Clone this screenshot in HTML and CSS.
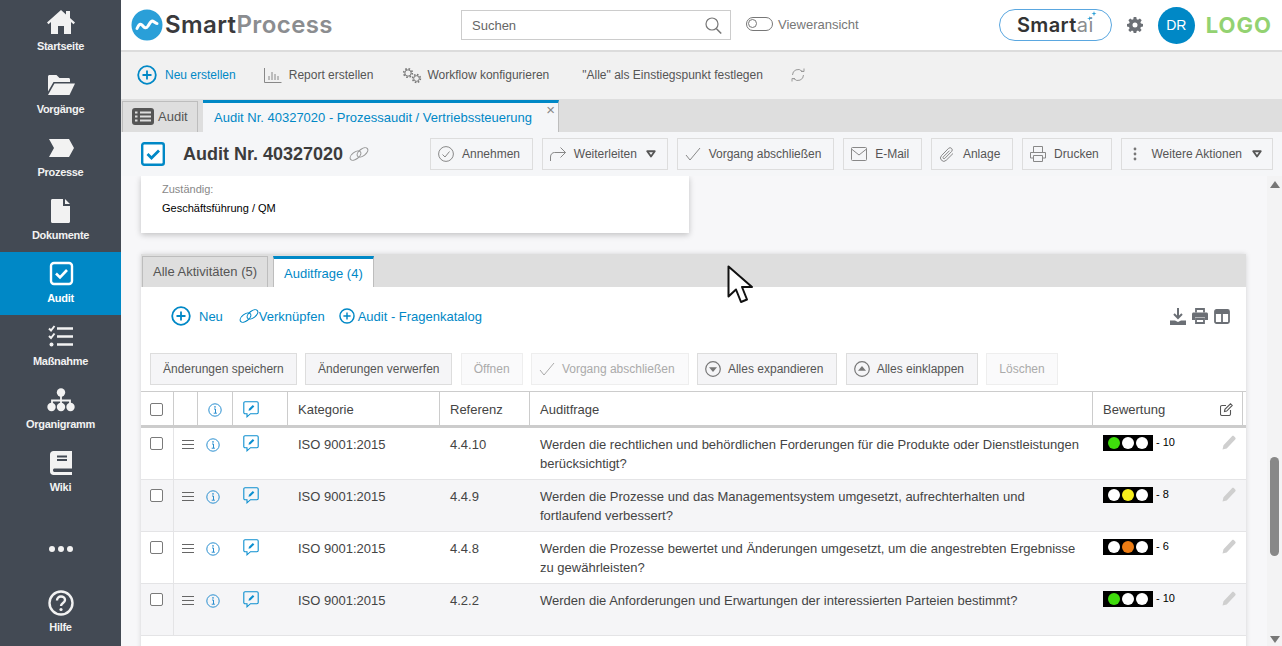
FILE: index.html
```html
<!DOCTYPE html>
<html lang="de">
<head>
    <meta charset="UTF-8">
    <meta name="viewport" content="width=device-width, initial-scale=1.0">
    <title>SmartProcess - Audit</title>
    <link rel="stylesheet" href="styles.css">
</head>
<body>

<svg class="icon-defs" xmlns="http://www.w3.org/2000/svg">
    <symbol id="i-plus" viewBox="0 0 20 20"><circle cx="10" cy="10" r="8.8" fill="none" stroke="currentColor" stroke-width="1.8"/><path d="M10 5.5v9M5.5 10h9" fill="none" stroke="currentColor" stroke-width="1.8"/></symbol>
    <symbol id="i-chain" viewBox="0 0 20 14"><g fill="none" stroke="currentColor" stroke-width="1.1"><ellipse cx="6.5" cy="8.6" rx="6.2" ry="3.4" transform="rotate(-38 6.5 8.6)"/><ellipse cx="13.5" cy="5.4" rx="6.2" ry="3.4" transform="rotate(-38 13.5 5.4)"/></g></symbol>
    <symbol id="i-info" viewBox="0 0 14 14"><circle cx="7" cy="7" r="6.2" fill="none" stroke="currentColor" stroke-width="1"/><path d="M6 6h1.5v4M5.7 10.2h3.2" fill="none" stroke="currentColor" stroke-width="1"/><circle cx="7" cy="3.9" r=".8" fill="currentColor"/></symbol>
    <symbol id="i-note" viewBox="0 0 16 17"><path d="M2 .8h12a1.2 1.2 0 0 1 1.2 1.2v9.5a1.2 1.2 0 0 1-1.2 1.2H7.5L4 15.8v-3.1H2A1.2 1.2 0 0 1 .8 11.5V2A1.2 1.2 0 0 1 2 .8z" fill="none" stroke="currentColor" stroke-width="1.1"/><path d="M5.5 9.8l.5-2 3.8-3.9 1.5 1.5-3.8 3.9z" fill="currentColor"/></symbol>
    <symbol id="i-pencil" viewBox="0 0 14 15"><path d="M0.5 14.5l1-4.2L10 1.2c.6-.6 1.4-.6 2 0l1.2 1.3c.6.6.6 1.4 0 2l-8.5 9z" fill="currentColor"/></symbol>
    <symbol id="i-caret" viewBox="0 0 12 9"><path d="M1.500 1.200h9L6 7.500z" fill="none" stroke="currentColor" stroke-width="2.200" stroke-linejoin="round"/></symbol>
    <symbol id="i-check" viewBox="0 0 16 16"><path d="M1 9l4 5L15 2" fill="none" stroke="currentColor" stroke-width="1"/></symbol>
</svg>

<div class="app">
    <nav class="sidebar">
        <a class="nav-item">
            <svg class="nav-icon" viewBox="0 0 28 24"><path d="M14 0L0 12.5l1.5 1.7L4 12v12h7v-8h6v8h7V12l2.500 2.200 1.500-1.700L23 8V1h-4v3.400z" fill="currentColor"/></svg>
            <span>Startseite</span>
        </a>
        <a class="nav-item">
            <svg class="nav-icon" viewBox="0 0 28 24"><path d="M1 3.500C1 2.600 1.700 2 2.500 2h7l3 3h9c.9 0 1.500.6 1.500 1.500V9H6.500L1 18.500z" fill="currentColor"/><path d="M7.500 10.500H28L22.500 22H1z" fill="currentColor"/></svg>
            <span>Vorgänge</span>
        </a>
        <a class="nav-item">
            <svg class="nav-icon" viewBox="0 0 28 24"><path d="M2 3h20l5 9-5 9H2l5-9z" fill="currentColor"/></svg>
            <span>Prozesse</span>
        </a>
        <a class="nav-item">
            <svg class="nav-icon" viewBox="0 0 28 24"><path d="M5.500 0H16v7h7v15.500c0 .9-.6 1.500-1.500 1.500h-16C4.600 24 4 23.400 4 22.500v-21C4 .6 4.600 0 5.500 0zM18 0l5 5h-5z" fill="currentColor"/></svg>
            <span>Dokumente</span>
        </a>
        <a class="nav-item active">
            <svg class="nav-icon" viewBox="0 0 28 24"><rect x="4" y="1" width="21" height="21" rx="3" fill="none" stroke="currentColor" stroke-width="2.400"/><path d="M9 11.500l4 4 7-7.500" fill="none" stroke="currentColor" stroke-width="2.600"/></svg>
            <span>Audit</span>
        </a>
        <a class="nav-item">
            <svg class="nav-icon" viewBox="0 0 28 24"><path d="M2 3.500L4 5.500 7.500 1M2 11L4 13 7.500 8.500" fill="none" stroke="currentColor" stroke-width="2"/><circle cx="4.500" cy="19.500" r="2" fill="currentColor"/><path d="M10 3.500h16M10 11.500h16M10 19.500h16" stroke="currentColor" stroke-width="2.400"/></svg>
            <span>Maßnahme</span>
        </a>
        <a class="nav-item">
            <svg class="nav-icon" viewBox="0 0 28 24"><circle cx="14" cy="4.500" r="4.200" fill="currentColor"/><path d="M14 8v8M5 16v-3.500h18V16" fill="none" stroke="currentColor" stroke-width="1.800"/><circle cx="4.500" cy="19" r="4.200" fill="currentColor"/><circle cx="14" cy="19" r="4.200" fill="currentColor"/><circle cx="23.500" cy="19" r="4.200" fill="currentColor"/></svg>
            <span>Organigramm</span>
        </a>
        <a class="nav-item">
            <svg class="nav-icon" viewBox="0 0 28 24"><path d="M6.500 0H25v17.500H7a2 2 0 0 0 0 3.500h18v3H6.500C4.500 24 3 22.500 3 20.500v-17C3 1.500 4.500 0 6.500 0z" fill="currentColor"/><path d="M10 5.500h10M10 9h10" stroke="#434a54" stroke-width="1.800"/></svg>
            <span>Wiki</span>
        </a>
        <div class="nav-more">
            <i></i><i></i><i></i>
        </div>
        <a class="nav-item">
            <svg class="nav-icon" viewBox="0 0 28 26"><circle cx="14" cy="13" r="11.500" fill="none" stroke="currentColor" stroke-width="2.400"/><path d="M10 10.500c0-2.500 1.800-4 4-4s4 1.500 4 3.500c0 3-4 3-4 6" fill="none" stroke="currentColor" stroke-width="2.400"/><circle cx="14" cy="19.500" r="1.600" fill="currentColor"/></svg>
            <span>Hilfe</span>
        </a>
    </nav>

    <main class="main">
        <header class="topbar">
            <div class="brand">
                <svg class="brand-mark" viewBox="0 0 32 32"><circle cx="16" cy="16" r="15.500" fill="#2a9fd8"/><path d="M6 19.500c2-4.500 3.500-5.500 5.500-3s3.500 3.500 5.500 .5 3.500-6 5.500-4.500 2.500 2 3.500 2" fill="none" stroke="#fff" stroke-width="3" stroke-linecap="round"/></svg>
                <span class="brand-name">Smart<em>Process</em></span>
            </div>
            <div class="search">
                <span>Suchen</span>
                <svg width="17" height="17" viewBox="0 0 17 17"><circle cx="7" cy="7" r="6" fill="none" stroke="#777" stroke-width="1.200"/><path d="M11.200 11.500l5 5" stroke="#777" stroke-width="1.500"/></svg>
            </div>
            <div class="viewer">
                <span class="toggle"><i></i></span>
                <span>Vieweransicht</span>
            </div>
            <div class="top-right">
                <div class="smartai">Smart<em>ai</em><svg class="sparks" width="10" height="11" viewBox="0 0 10 11"><path d="M7 0l.6 2 1.900.6-1.900.6L7 5.200l-.6-2-1.900-.6 1.900-.6zM2.500 5l.5 2 2 .5-2 .5-.5 2-.5-2-2-.5 2-.5z" fill="#2a9fd8"/></svg></div>
                <svg class="gear" width="16" height="16" viewBox="0 0 16 16"><path d="M6.700 0h2.600l.4 2.200 1.300.6L12.900 1.500l1.800 1.800-1.300 1.900.6 1.300 2 .4v2.600l-2.100.4-.6 1.300 1.300 1.900-1.800 1.800-1.900-1.300-1.300.6-.4 2.100H6.700l-.4-2.100-1.300-.6-1.900 1.300-1.800-1.800 1.300-1.900-.6-1.300-2-.4V6.900l2.100-.4.6-1.300-1.300-1.900 1.800-1.800L5 2.800l1.300-.6zM8 5.500a2.500 2.500 0 1 0 0 5 2.500 2.500 0 0 0 0-5z" fill="#6b6f75" fill-rule="evenodd"/></svg>
                <div class="avatar">DR</div>
                <div class="logo-text">LOGO</div>
            </div>
        </header>

        <div class="actionbar">
            <a class="action primary"><svg class="i20"><use href="#i-plus"/></svg>Neu erstellen</a>
            <a class="action report">
                <svg width="18" height="16" viewBox="0 0 18 16"><path d="M.5 1v14.500h17M5 13V9M8 13V5M11 13V7M14 13V9" fill="none" stroke="#888" stroke-width="1"/></svg>
                Report erstellen
            </a>
            <a class="action workflow">
                <svg width="20" height="17" viewBox="0 0 20 17"><g fill="none" stroke="#777"><circle cx="6" cy="6" r="3.200"/><circle cx="6" cy="6" r="4.300" stroke-width="1.600" stroke-dasharray="1.600 1.780"/><circle cx="14.500" cy="11.500" r="2.800"/><circle cx="14.500" cy="11.500" r="3.900" stroke-width="1.600" stroke-dasharray="1.600 1.460"/></g></svg>
                Workflow konfigurieren
            </a>
            <a class="action entry">"Alle" als Einstiegspunkt festlegen</a>
            <svg class="refresh" width="14" height="14" viewBox="0 0 14 14"><path d="M1.500 7a5.500 5.500 0 0 1 9.500-3.800L13 3.500M13 .5v3h-3M12.500 7A5.500 5.500 0 0 1 3 10.800L1 10.500M1 13.500v-3h3" fill="none" stroke="#999" stroke-width="1"/></svg>
        </div>

        <div class="tabbar">
            <a class="tab">
                <svg width="22" height="17" viewBox="0 0 22 17"><rect width="22" height="17" rx="3" fill="#555"/><path d="M8 4.500h11M8 8.500h11M8 12.500h11M3 4.500h2.500M3 8.500h2.500M3 12.500h2.500" stroke="#ddd" stroke-width="1.800"/></svg>
                Audit
            </a>
            <a class="tab tab-active">
                Audit Nr. 40327020 - Prozessaudit / Vertriebssteuerung
                <span class="tab-close">×</span>
            </a>
        </div>

        <div class="titlebar">
            <svg class="title-icon" viewBox="0 0 24 24"><rect x="1.200" y="1.200" width="21.600" height="21.600" rx="2" fill="#fff" stroke="#0088c6" stroke-width="2.400"/><path d="M6.500 12l4 4 7.500-7.500" fill="none" stroke="#0088c6" stroke-width="2.800"/></svg>
            <h1>Audit Nr. 40327020</h1>
            <svg class="title-chain"><use href="#i-chain"/></svg>
            <div class="title-actions">
                <a class="btn"><svg class="i16" viewBox="0 0 16 16"><circle cx="8" cy="8" r="7.400" fill="none" stroke="#888" stroke-width="1"/><path d="M4.500 8.500l2.500 2.500 4.500-5.500" fill="none" stroke="#888" stroke-width="1"/></svg>Annehmen</a>
                <a class="btn btn-drop"><svg class="i16" viewBox="0 0 16 16"><path d="M.5 15V11c0-3 2-4.500 4-4.500h11M10.500 1.500l5 5-5 5" fill="none" stroke="#888" stroke-width="1"/></svg>Weiterleiten<svg class="caret"><use href="#i-caret"/></svg></a>
                <a class="btn"><svg class="i16 muted"><use href="#i-check"/></svg>Vorgang abschließen</a>
                <a class="btn"><svg class="i16" viewBox="0 0 16 16"><rect x=".5" y="1.500" width="15" height="13" rx="1" fill="none" stroke="#888"/><path d="M.5 3l7.500 6 7.500-6" fill="none" stroke="#888"/></svg>E-Mail</a>
                <a class="btn"><svg class="i16" viewBox="0 0 16 16"><path d="M14 7.500L7.200 14.300a3.300 3.300 0 0 1-4.700-4.700L9.600 2.300a2.200 2.200 0 0 1 3.100 3.100L5.800 12.400a1 1 0 0 1-1.500-1.500L10.500 4.700" fill="none" stroke="#888"/></svg>Anlage</a>
                <a class="btn"><svg class="i16" viewBox="0 0 16 16"><path d="M3.500 6V.5h9V6M3.500 12H.5V6.500h15V12h-3M3.500 9.500h9v6h-9z" fill="none" stroke="#888"/></svg>Drucken</a>
                <a class="btn btn-more"><svg class="dots" width="4" height="14" viewBox="0 0 4 14"><circle cx="2" cy="2" r="1.400" fill="#777"/><circle cx="2" cy="7" r="1.400" fill="#777"/><circle cx="2" cy="12" r="1.400" fill="#777"/></svg>Weitere Aktionen<svg class="caret"><use href="#i-caret"/></svg></a>
            </div>
        </div>

        <div class="content">
            <div class="scroll-area">
                <section class="info-card">
                    <div class="info-label">Zuständig:</div>
                    <div class="info-value">Geschäftsführung / QM</div>
                </section>

                <section class="panel">
                    <div class="panel-tabs">
                        <a class="panel-tab">Alle Aktivitäten (5)</a>
                        <a class="panel-tab panel-tab-active">Auditfrage (4)</a>
                    </div>

                    <div class="panel-tools">
                        <a class="tool tool-new"><svg class="i20"><use href="#i-plus"/></svg>Neu</a>
                        <a class="tool tool-link"><svg class="i-link"><use href="#i-chain"/></svg>Verknüpfen</a>
                        <a class="tool tool-cat"><svg class="i16"><use href="#i-plus"/></svg>Audit - Fragenkatalog</a>
                        <div class="tool-icons">
                            <svg width="16" height="17" viewBox="0 0 16 17"><path d="M8 0v9M4 6l4 4 4-4" fill="none" stroke="#6b6f75" stroke-width="2"/><path d="M0 12.500h5l3 1.500 3-1.500h5V17H0z" fill="#6b6f75"/></svg>
                            <svg width="16" height="16" viewBox="0 0 16 16"><path d="M4 4.500V1h8v3.500" fill="none" stroke="#6b6f75" stroke-width="1.800"/><path d="M1.500 4.500h13c.8 0 1.500.7 1.500 1.500v6h-3V9.500H3V12H0V6c0-.8.7-1.500 1.500-1.500z" fill="#6b6f75"/><path d="M4 11h8v4H4z" fill="none" stroke="#6b6f75" stroke-width="1.800"/></svg>
                            <svg width="16" height="15" viewBox="0 0 16 15"><rect x="1" y="1" width="14" height="13" rx="1.500" fill="none" stroke="#6b6f75" stroke-width="1.800"/><path d="M1 3.500h14" stroke="#6b6f75" stroke-width="3"/><path d="M8 2v12" stroke="#6b6f75" stroke-width="1.800"/></svg>
                        </div>
                    </div>

                    <div class="panel-buttons">
                        <a class="btn-plain">Änderungen speichern</a>
                        <a class="btn-plain">Änderungen verwerfen</a>
                        <a class="btn-plain disabled">Öffnen</a>
                        <a class="btn-plain disabled btn-icon"><svg class="i16"><use href="#i-check"/></svg>Vorgang abschließen</a>
                        <a class="btn-plain btn-icon"><svg class="i16" viewBox="0 0 16 16"><circle cx="8" cy="8" r="7.300" fill="none" stroke="#777" stroke-width="1.200"/><path d="M4 6.300h8L8 11z" fill="#777"/></svg>Alles expandieren</a>
                        <a class="btn-plain btn-icon"><svg class="i16" viewBox="0 0 16 16"><circle cx="8" cy="8" r="7.300" fill="none" stroke="#777" stroke-width="1.200"/><path d="M4 9.700h8L8 5z" fill="#777"/></svg>Alles einklappen</a>
                        <a class="btn-plain disabled">Löschen</a>
                    </div>

                    <div class="grid-head">
                        <div class="cell"><span class="checkbox"></span></div>
                        <div class="cell"></div>
                        <div class="cell cell-center"><svg class="i14"><use href="#i-info"/></svg></div>
                        <div class="cell cell-note"><svg class="i-note"><use href="#i-note"/></svg></div>
                        <div class="cell cell-text">Kategorie</div>
                        <div class="cell cell-text">Referenz</div>
                        <div class="cell cell-text">Auditfrage</div>
                        <div class="cell cell-text cell-rating">
                            Bewertung
                            <svg width="13" height="13" viewBox="0 0 13 13"><path d="M10.500 7v4a1.500 1.500 0 0 1-1.500 1.500H2A1.500 1.500 0 0 1 .5 11V4A1.500 1.500 0 0 1 2 2.500h4" fill="none" stroke="#555" stroke-width="1.100"/><path d="M4.500 8.500l.4-2.200L10.500 .8l1.700 1.700-5.500 5.600z" fill="none" stroke="#555" stroke-width="1.100"/></svg>
                        </div>
                        <div class="cell"></div>
                    </div>

                    <div class="grid-row">
                        <div class="rcell rcell-check"><span class="checkbox"></span></div>
                        <div class="rcell rcell-menu"><span class="burger"></span></div>
                        <div class="rcell rcell-info"><svg class="i14"><use href="#i-info"/></svg></div>
                        <div class="rcell rcell-note"><svg class="i-note"><use href="#i-note"/></svg></div>
                        <div class="rcell rcell-text">ISO 9001:2015</div>
                        <div class="rcell rcell-text">4.4.10</div>
                        <div class="rcell rcell-text">Werden die rechtlichen und behördlichen Forderungen für die Produkte oder Dienstleistungen berücksichtigt?</div>
                        <div class="rcell rcell-rating">
                            <span class="lights"><i class="green"></i><i></i><i></i></span><span class="score">- 10</span>
                            <svg class="pencil"><use href="#i-pencil"/></svg>
                        </div>
                    </div>
                    <div class="grid-row alt">
                        <div class="rcell rcell-check"><span class="checkbox"></span></div>
                        <div class="rcell rcell-menu"><span class="burger"></span></div>
                        <div class="rcell rcell-info"><svg class="i14"><use href="#i-info"/></svg></div>
                        <div class="rcell rcell-note"><svg class="i-note"><use href="#i-note"/></svg></div>
                        <div class="rcell rcell-text">ISO 9001:2015</div>
                        <div class="rcell rcell-text">4.4.9</div>
                        <div class="rcell rcell-text">Werden die Prozesse und das Managementsystem umgesetzt, aufrechterhalten und fortlaufend verbessert?</div>
                        <div class="rcell rcell-rating">
                            <span class="lights"><i></i><i class="yellow"></i><i></i></span><span class="score">- 8</span>
                            <svg class="pencil"><use href="#i-pencil"/></svg>
                        </div>
                    </div>
                    <div class="grid-row">
                        <div class="rcell rcell-check"><span class="checkbox"></span></div>
                        <div class="rcell rcell-menu"><span class="burger"></span></div>
                        <div class="rcell rcell-info"><svg class="i14"><use href="#i-info"/></svg></div>
                        <div class="rcell rcell-note"><svg class="i-note"><use href="#i-note"/></svg></div>
                        <div class="rcell rcell-text">ISO 9001:2015</div>
                        <div class="rcell rcell-text">4.4.8</div>
                        <div class="rcell rcell-text">Werden die Prozesse bewertet und Änderungen umgesetzt, um die angestrebten Ergebnisse zu gewährleisten?</div>
                        <div class="rcell rcell-rating">
                            <span class="lights"><i></i><i class="orange"></i><i></i></span><span class="score">- 6</span>
                            <svg class="pencil"><use href="#i-pencil"/></svg>
                        </div>
                    </div>
                    <div class="grid-row alt">
                        <div class="rcell rcell-check"><span class="checkbox"></span></div>
                        <div class="rcell rcell-menu"><span class="burger"></span></div>
                        <div class="rcell rcell-info"><svg class="i14"><use href="#i-info"/></svg></div>
                        <div class="rcell rcell-note"><svg class="i-note"><use href="#i-note"/></svg></div>
                        <div class="rcell rcell-text">ISO 9001:2015</div>
                        <div class="rcell rcell-text">4.2.2</div>
                        <div class="rcell rcell-text">Werden die Anforderungen und Erwartungen der interessierten Parteien bestimmt?</div>
                        <div class="rcell rcell-rating">
                            <span class="lights"><i class="green"></i><i></i><i></i></span><span class="score">- 10</span>
                            <svg class="pencil"><use href="#i-pencil"/></svg>
                        </div>
                    </div>
                </section>
            </div>

            <div class="scrollbar">
                <span class="arrow-up"></span>
                <span class="thumb"></span>
                <span class="arrow-down"></span>
            </div>
        </div>
    </main>
</div>

<!-- Mauszeiger aus der Aufnahme -->
<svg class="cursor" width="27" height="40" viewBox="0 0 27 40"><path d="M1.500 1.500v30l7.500-7 5 12.500 6-2.500-5-12.500h10z" fill="#fff" stroke="#111" stroke-width="2" stroke-linejoin="round"/></svg>

</body>
</html>
```
FILE: styles.css
```css
* {
    box-sizing: border-box;
}

html, body {
    margin: 0;
    padding: 0;
    height: 100%;
    overflow: hidden;
    font-family: "Liberation Sans", Arial, sans-serif;
    font-size: 12px;
    color: #444;
}

.icon-defs {
    display: none;
}

.app {
    display: flex;
    height: 100vh;
}

.i20 { width: 20px; height: 20px; }
.i16 { width: 16px; height: 16px; flex: none; }
.i14 { width: 14px; height: 14px; }

/* Linke Navigation */
.sidebar {
    width: 121px;
    flex: none;
    background: #434a54;
    color: #f2f2f2;
    display: flex;
    flex-direction: column;
}

.nav-item {
    height: 63px;
    flex: none;
    padding-top: 9px;
    display: flex;
    flex-direction: column;
    align-items: center;
    font-size: 11px;
    font-weight: bold;
    letter-spacing: -0.3px;
}

.nav-item.active {
    background: #0088c6;
    color: #fff;
}

.nav-icon {
    width: 28px;
    height: 26px;
    margin-bottom: 5px;
}

.nav-more {
    height: 77px;
    flex: none;
    padding-bottom: 29px;
    display: flex;
    justify-content: center;
    align-items: flex-end;
    gap: 3px;
}

.nav-more i {
    width: 6px;
    height: 6px;
    border-radius: 50%;
    background: #f2f2f2;
}

/* Hauptbereich */
.main {
    flex: 1;
    min-width: 0;
    display: flex;
    flex-direction: column;
}

.topbar {
    height: 52px;
    flex: none;
    background: #fff;
    border-bottom: 2px solid #dcdcdc;
    padding: 0 10px;
    display: flex;
    align-items: center;
}

.brand {
    width: 330px;
    display: flex;
    align-items: center;
    gap: 2px;
}

.brand-mark {
    width: 32px;
    height: 32px;
}

.brand-name {
    margin-top: -2px;
    font-family: Inter, "Open Sans", sans-serif;
    font-size: 24px;
    font-weight: 600;
    letter-spacing: .4px;
    color: #3a3a3c;
}

.brand-name em,
.smartai em {
    font-style: normal;
    color: #8b8d90;
}

.search {
    width: 270px;
    height: 30px;
    border: 1px solid #ccc;
    padding: 0 8px 0 10px;
    display: flex;
    align-items: center;
    justify-content: space-between;
    font-size: 13px;
    color: #666;
}

.viewer {
    margin-left: 15px;
    display: flex;
    align-items: center;
    gap: 5px;
    font-size: 13px;
    color: #777;
    margin-top: -2px;
}

.toggle {
    width: 27px;
    height: 14px;
    border: 1.5px solid #777;
    border-radius: 7px;
    padding: 1px;
}

.toggle i {
    display: block;
    width: 9px;
    height: 9px;
    border: 1.5px solid #777;
    border-radius: 50%;
}

.top-right {
    margin-left: auto;
    display: flex;
    align-items: center;
}

.smartai {
    position: relative;
    width: 113px;
    height: 32px;
    border: 1px solid #5aa7e0;
    border-radius: 16px;
    display: flex;
    align-items: center;
    justify-content: center;
    font-family: Inter, "Open Sans", sans-serif;
    font-size: 20px;
    font-weight: 600;
    letter-spacing: .4px;
    color: #333;
}

.smartai em {
    font-weight: 400;
}

.sparks {
    position: absolute;
    top: 1px;
    right: 14px;
}

.gear {
    margin-left: 15px;
}

.avatar {
    width: 37px;
    height: 37px;
    margin-left: 15px;
    border-radius: 50%;
    background: #0088c6;
    color: #fff;
    font-size: 14px;
    display: flex;
    align-items: center;
    justify-content: center;
}

.logo-text {
    margin-left: 11px;
    font-family: Inter, "Open Sans", sans-serif;
    font-size: 22px;
    font-weight: 700;
    letter-spacing: 1px;
    color: #93d271;
}

.actionbar {
    height: 47px;
    flex: none;
    background: #f1f1f1;
    padding: 0 0 1px 16px;
    display: flex;
    align-items: center;
    color: #555;
}

.action {
    display: flex;
    align-items: center;
}

.action.primary {
    color: #0088c6;
    gap: 8px;
}

.action.report {
    margin-left: 28px;
    gap: 7px;
}

.action.workflow {
    margin-left: 29px;
    gap: 5px;
}

.action.entry {
    margin-left: 33px;
}

.refresh {
    margin-left: 28px;
}

/* Reiter */
.tabbar {
    height: 33px;
    flex: none;
    background: #dedede;
    padding: 1px 0 0 1px;
    display: flex;
    align-items: flex-end;
    gap: 5px;
}

.tab {
    width: 76px;
    height: 31px;
    border: 1px solid #bdbdbd;
    border-bottom: 0;
    padding-left: 9px;
    padding-bottom: 2px;
    display: flex;
    align-items: center;
    gap: 4px;
    font-size: 13px;
    color: #555;
}

.tab-active {
    width: 356px;
    height: 32px;
    background: #f5f6f8;
    border: 0;
    border-top: 3px solid #0088c6;
    border-right: 1px solid #bdbdbd;
    padding-left: 11px;
    padding-bottom: 0;
    color: #0088c6;
    position: relative;
}

.tab-close {
    position: absolute;
    top: 0;
    right: 3px;
    font-size: 15px;
    line-height: 14px;
    color: #888;
}

.titlebar {
    height: 44px;
    flex: none;
    background: #f5f6f8;
    padding: 0 9px 0 20px;
    display: flex;
    align-items: center;
}

.title-icon {
    width: 24px;
    height: 24px;
}

.titlebar h1 {
    margin: 1px 0 0 18px;
    font-size: 18px;
    color: #3c3c3c;
}

.title-chain {
    width: 20px;
    height: 14px;
    margin-left: 6px;
    color: #999;
}

.title-actions {
    margin-left: auto;
    display: flex;
    gap: 8.75px;
}

.btn {
    height: 32px;
    border: 1px solid #ddd;
    padding: 0 12px 0 7px;
    display: flex;
    align-items: center;
    gap: 8px;
    white-space: nowrap;
    color: #555;
}

.btn .muted {
    color: #888;
}

.caret {
    width: 10px;
    height: 8px;
    color: #555;
}

.btn-drop {
    padding-right: 11px;
}

.btn-drop .caret {
    margin-left: 1px;
}

.btn-more {
    padding-left: 11px;
    padding-right: 10px;
    gap: 15px;
}

.btn-more .caret {
    margin-left: -5px;
}

/* Inhalt */
.content {
    flex: 1;
    min-height: 0;
    background: #f7f7f9;
    display: flex;
    overflow: hidden;
}

.scroll-area {
    flex: 1;
    padding-left: 20px;
}

.info-card {
    width: 548px;
    height: 57px;
    background: #fff;
    box-shadow: 0 2px 6px rgba(0, 0, 0, .22);
    padding: 7px 21px 0;
    font-size: 11px;
    color: #000;
}

.info-label {
    color: #888;
    margin-bottom: 7px;
}

.panel {
    width: 1105px;
    margin-top: 21px;
    padding-bottom: 40px;
    background: #fff;
    box-shadow: 0 0 5px rgba(0, 0, 0, .15);
}

.panel-tabs {
    height: 33px;
    background: #dedede;
    padding-left: 1px;
    display: flex;
    align-items: flex-end;
    gap: 5px;
}

.panel-tab {
    width: 126px;
    height: 31px;
    border: 1px solid #bdbdbd;
    border-bottom: 0;
    padding-left: 10px;
    padding-bottom: 2px;
    display: flex;
    align-items: center;
    font-size: 13px;
    color: #555;
}

.panel-tab-active {
    width: 101px;
    background: #fff;
    border-top: 3px solid #0088c6;
    padding-bottom: 0;
    color: #0088c6;
}

.panel-tools {
    height: 66px;
    padding: 0 16px 8px 30px;
    display: flex;
    align-items: center;
    font-size: 13px;
    color: #0088c6;
}

.tool {
    display: flex;
    align-items: center;
}

.tool-new {
    gap: 8px;
}

.tool-link {
    margin-left: 16px;
}

.i-link {
    width: 20px;
    height: 14px;
}

.tool-cat {
    margin-left: 14px;
    gap: 3px;
}

.tool-icons {
    margin-left: auto;
    display: flex;
    align-items: center;
    gap: 6px;
}

.panel-buttons {
    height: 32px;
    margin-left: 9px;
    display: flex;
    gap: 8.3px;
}

.btn-plain {
    height: 32px;
    background: #f5f5f7;
    border: 1px solid #ddd;
    padding: 0 12px;
    display: flex;
    align-items: center;
    white-space: nowrap;
    color: #555;
}

.btn-icon {
    gap: 7px;
    padding-left: 7px;
    padding-right: 13px;
}

.btn-plain.disabled {
    background: #fafafb;
    border-color: #eee;
    color: #aaa;
}

/* Tabelle */
.grid-head,
.grid-row {
    display: grid;
    grid-template-columns: 33px 24px 35px 55px 152px 90px 563px 150px 3px;
}

.grid-head {
    height: 37px;
    margin-top: 6px;
    border-top: 1px solid #ccc;
    border-bottom: 3px solid #ccc;
    font-size: 13px;
}

.cell {
    border-right: 1px solid #ccc;
    display: flex;
    align-items: center;
    padding-left: 9px;
    padding-top: 2px;
}

.cell:last-child {
    border-right: 0;
}

.cell-center {
    justify-content: center;
    padding-left: 0;
    color: #2a8fd0;
}

.cell-note {
    padding-left: 10px;
    color: #0088c6;
}

.cell-text {
    padding-left: 10px;
}

.cell-rating {
    justify-content: space-between;
    padding-right: 9px;
}

.i-note {
    width: 16px;
    height: 17px;
    color: #0c8fd0;
}

.checkbox {
    display: block;
    width: 13px;
    height: 13px;
    border: 1px solid #7a7a7a;
    border-radius: 2px;
    background: #fff;
}

.grid-row {
    height: 52px;
    border-bottom: 1px solid #e4e4e6;
    font-size: 13px;
}

.grid-row.alt {
    background: #f5f5f7;
}

.rcell {
    padding-top: 9px;
}

.rcell-check {
    padding-left: 9px;
    border-right: 1px solid #e4e4e6;
}

.rcell-menu {
    padding: 12px 0 0 8px;
}

.burger {
    display: block;
    width: 12px;
    height: 9px;
    border-top: 1px solid #666;
    border-bottom: 1px solid #666;
    position: relative;
}

.burger::after {
    content: "";
    position: absolute;
    left: 0;
    right: 0;
    top: 3px;
    border-top: 1px solid #666;
}

.rcell-info {
    padding: 10px 0 0 8px;
    color: #2a8fd0;
}

.rcell-note {
    padding: 7px 0 0 10px;
}

.rcell-text {
    padding: 7px 8px 0 10px;
    line-height: 19px;
}

.rcell-rating {
    padding: 7px 0 0 10px;
    display: flex;
    align-items: flex-start;
}

.lights {
    width: 50px;
    height: 16px;
    flex: none;
    background: #000;
    padding-left: 5px;
    display: flex;
    align-items: center;
    gap: 2px;
}

.lights i {
    width: 12px;
    height: 12px;
    border-radius: 50%;
    background: #fff;
}

.lights .green { background: #3fdc0c; }
.lights .yellow { background: #f7ee1d; }
.lights .orange { background: #ee7d14; }

.score {
    margin-left: 3px;
    width: 63px;
    font-size: 11px;
    line-height: 15px;
    color: #000;
}

.pencil {
    width: 14px;
    height: 15px;
    flex: none;
    color: #cfcfcf;
    margin-left: 3px;
}

/* Scrollleiste */
.scrollbar {
    width: 15px;
    flex: none;
    background: #f3f3f4;
    display: flex;
    flex-direction: column;
    align-items: center;
    padding-top: 5px;
}

.arrow-up {
    border-left: 5px solid transparent;
    border-right: 5px solid transparent;
    border-bottom: 7px solid #777;
}

.thumb {
    width: 9px;
    height: 99px;
    margin-top: 269px;
    border-radius: 5px;
    background: #888;
}

.arrow-down {
    margin-top: 80px;
    border-left: 5px solid transparent;
    border-right: 5px solid transparent;
    border-top: 7px solid #777;
}

.cursor {
    position: absolute;
    left: 727px;
    top: 265px;
}
```
